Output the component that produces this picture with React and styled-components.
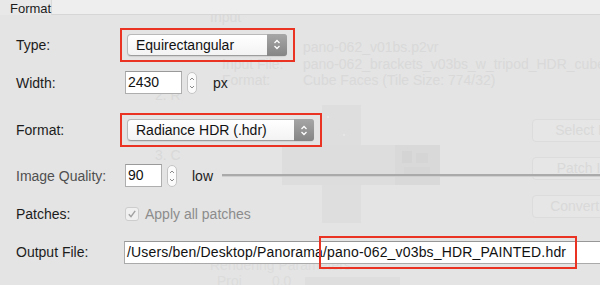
import styled, { createGlobalStyle } from 'styled-components';

const GlobalStyle = createGlobalStyle`
  html, body {
    margin: 0;
    padding: 0;
  }
  body {
    background: #e4e4e4;
    font-family: "Liberation Sans", Arial, sans-serif;
  }
`;

const Window = styled.div`
    position: relative;
    width: 600px;
    height: 285px;
    overflow: hidden;
    background: #e4e4e4;
    font-family: "Liberation Sans", Arial, sans-serif;
    font-size: 14px;
`;

/* faded window behind the sheet */
const Ghost = styled.div`
    position: absolute;
    inset: 0;
    display: flex;
    color: #d9d9d9;
    line-height: 16px;
    pointer-events: none;
`;

const GhostSteps = styled.div`
    flex: 0 0 55px;
    padding-left: 155px;
    display: flex;
    flex-direction: column;
`;

const GhostStep = styled.div`
    margin-top: ${props => props.$top}px;
    white-space: nowrap;
`;

const GhostMain = styled.div`
    flex: 0 0 322px;
    display: grid;
    grid-template-columns: 72px 158px 92px;
    grid-template-rows: 105px 153px 15px 12px;
`;

const GhostInfo = styled.div`
    grid-column: 1 / -1;
    grid-row: 1;
    padding-top: 9px;
    white-space: nowrap;
`;

const GhostInfoGrid = styled.div`
    margin-top: 14px;
    display: grid;
    grid-template-columns: 93px auto;
    line-height: 16.5px;

    .label {
        padding-left: 12px;
    }
`;

const GhostCube = styled.svg`
    grid-column: 2;
    grid-row: 2 / 5;
    display: block;
`;

const GhostCaption = styled.div`
    grid-column: 1 / 3;
    grid-row: ${props => props.$row};
    padding-left: ${props => props.$indent || 0}px;
    display: flex;
    gap: 30px;
    line-height: ${props => props.$lh || 15}px;
    color: #dcdcdc;
    white-space: nowrap;
    z-index: 1;
`;

const GhostButtons = styled.div`
    flex: 0 0 68px;
    display: flex;
    flex-direction: column;
    gap: 15px;
    padding-top: 119px;
`;

const GhostButton = styled.div`
    width: 132px;
    height: 23px;
    box-sizing: border-box;
    border: 1px solid #dcdcdc;
    border-radius: 4px;
    background: #e6e6e6;
    text-align: center;
    line-height: 21px;
    white-space: nowrap;
`;

/* sheet */
const TopBar = styled.div`
    position: relative;
    z-index: 1;
    display: flex;
    height: 15px;
`;

const Tab = styled.div`
    width: 52px;
    box-sizing: border-box;
    padding-left: 10px;
    background: #e8e8e8;
    border-right: 1px solid #dadada;
    font-size: 13px;
    line-height: 17px;
    color: #1c1c1c;
`;

const TabRest = styled.div`
    flex: 1;
    background: #eeeeee;
    border-bottom: 1px solid #d6d6d6;
`;

const Form = styled.div`
    position: relative;
    z-index: 1;
    display: grid;
    grid-template-columns: 109px 1fr;
    grid-template-rows: 35px 41px 54px 37px 40px 36px;
    align-items: center;
    padding: 12px 0 0 16px;
`;

const Label = styled.div`
    color: ${props => props.$muted ? '#505050' : '#1c1c1c'};
    white-space: nowrap;
`;

const Field = styled.div`
    display: flex;
    align-items: center;
    min-width: 0;
`;

const Highlight = styled.div`
    display: inline-flex;
    margin-left: -5px;
    padding: 4px 6px 4px 5px;
    border: 2px solid #ea3323;
`;

const Select = styled.div`
    display: flex;
    width: ${props => props.$width}px;
    height: 22px;
    box-sizing: border-box;
    border: 1px solid #b9b9b9;
    border-bottom-color: #9d9d9d;
    border-radius: 4px;
    background: linear-gradient(#ffffff, #f3f3f3);
    box-shadow: 0 1px 1px rgba(0, 0, 0, 0.08);
`;

const SelectText = styled.div`
    flex: 1;
    padding-left: 8px;
    line-height: 20px;
    color: #111;
    white-space: nowrap;
`;

const SelectArrows = styled.div`
    width: 20px;
    display: flex;
    align-items: center;
    justify-content: center;
    background: linear-gradient(#a6a6a6, #858585);
    border-radius: 0 3px 3px 0;
    margin: -1px -1px -1px 0;
`;

const NumberBox = styled.div`
    width: ${props => props.$width}px;
    height: 23px;
    box-sizing: border-box;
    border: 1px solid #aeaeae;
    border-top-color: #9a9a9a;
    background: #fff;
    padding-left: 2px;
    line-height: 21px;
    color: #111;
`;

const Stepper = styled.div`
    width: 10px;
    height: 22px;
    box-sizing: border-box;
    margin-left: 5px;
    border: 1px solid #c4c4c4;
    border-radius: 5px;
    background: #fbfbfb;
    display: flex;
    align-items: center;
    justify-content: center;
`;

const Unit = styled.span`
    margin-left: ${props => props.$gap}px;
    color: #1c1c1c;
`;

const Slider = styled.div`
    flex: 1;
    margin-left: 9px;
    height: 2px;
    background: #aaaaaa;
    border-bottom: 1px solid #cfcfcf;
`;

const CheckBox = styled.div`
    width: 14px;
    height: 14px;
    box-sizing: border-box;
    border: 1px solid #cdcdcd;
    border-radius: 3px;
    background: #f0f0f0;
    display: flex;
    align-items: center;
    justify-content: center;
`;

const CheckText = styled.span`
    margin-left: 6px;
    color: #8c8c8c;
`;

const PathBox = styled.div`
    flex: 1;
    height: 23px;
    box-sizing: border-box;
    margin-left: -1px;
    margin-right: -20px;
    border: 1px solid #aaaaaa;
    border-top-color: #979797;
    background: #fff;
    padding-left: 2px;
    line-height: 21px;
    letter-spacing: 0.17px;
    color: #111;
    white-space: nowrap;
`;

const Marked = styled.span`
    position: relative;

    &::after {
        content: '';
        position: absolute;
        left: -4px;
        right: -11px;
        top: -8px;
        bottom: -9px;
        border: 2px solid #ea3323;
    }
`;

const BigArrows = () => (
  <svg width="8" height="13" viewBox="0 0 8 13">
    <path d="M1.5 5 L4 2.5 L6.5 5 M1.5 8 L4 10.5 L6.5 8" fill="none" stroke="#fff" strokeWidth="1.3" />
  </svg>
);

const SmallArrows = () => (
  <svg width="6" height="16" viewBox="0 0 6 16">
    <path d="M1 5 L3 3 L5 5 M1 11 L3 13 L5 11" fill="none" stroke="#8a8a8a" strokeWidth="1" />
  </svg>
);

const CheckMark = () => (
  <svg width="10" height="10" viewBox="0 0 10 10">
    <path d="M1.8 5.2 L4 7.6 L8.2 1.8" fill="none" stroke="#a0a0a0" strokeWidth="1.4" />
  </svg>
);

const CubeDrawing = () => (
  <GhostCube width="158" height="180" viewBox="0 0 158 180">
    <rect x="40" y="0" width="39" height="118" fill="#dedede" />
    <rect x="0" y="40" width="158" height="40" fill="#dddddd" />
    <rect x="113" y="40" width="45" height="40" fill="#d9d9d9" />
    <rect x="120" y="46" width="10" height="12" fill="#d4d4d4" />
    <rect x="134" y="48" width="12" height="10" fill="#d5d5d5" />
    <rect x="122" y="62" width="26" height="8" fill="#d6d6d6" />
    <circle cx="46" cy="12" r="1" fill="#e8e8e8" />
    <circle cx="62" cy="30" r="1" fill="#e8e8e8" />
    <rect x="23" y="172" width="95" height="8" fill="#dedede" />
  </GhostCube>
);

const App = () => (
  <Window>
    <GlobalStyle />
    <Ghost>
      <GhostSteps>
        <GhostStep $top={87}>2. R</GhostStep>
        <GhostStep $top={44}>3. C</GhostStep>
      </GhostSteps>
      <GhostMain>
        <GhostInfo>
          <div>Input</div>
          <GhostInfoGrid>
            <span className="label">Project:</span>
            <span>pano-062_v01bs.p2vr</span>
            <span className="label">Input File:</span>
            <span>pano-062_brackets_v03bs_w_tripod_HDR_cube.tif</span>
            <span className="label">Format:</span>
            <span>Cube Faces (Tile Size: 774/32)</span>
          </GhostInfoGrid>
        </GhostInfo>
        <CubeDrawing />
        <GhostCaption $row={3}>Rendering Parameters</GhostCaption>
        <GhostCaption $row={4} $indent={7} $lh={16}>
          <span>Proj</span>
          <span>0.0</span>
        </GhostCaption>
      </GhostMain>
      <GhostButtons>
        <GhostButton>Select Input...</GhostButton>
        <GhostButton>Patch Input...</GhostButton>
        <GhostButton>Convert Input...</GhostButton>
      </GhostButtons>
    </Ghost>

    <TopBar>
      <Tab>Format</Tab>
      <TabRest />
    </TopBar>

    <Form>
      <Label>Type:</Label>
      <Field>
        <Highlight>
          <Select $width={160}>
            <SelectText>Equirectangular</SelectText>
            <SelectArrows><BigArrows /></SelectArrows>
          </Select>
        </Highlight>
      </Field>

      <Label>Width:</Label>
      <Field>
        <NumberBox $width={57}>2430</NumberBox>
        <Stepper><SmallArrows /></Stepper>
        <Unit $gap={16}>px</Unit>
      </Field>

      <Label>Format:</Label>
      <Field>
        <Highlight>
          <Select $width={187}>
            <SelectText>Radiance HDR (.hdr)</SelectText>
            <SelectArrows><BigArrows /></SelectArrows>
          </Select>
        </Highlight>
      </Field>

      <Label $muted>Image Quality:</Label>
      <Field>
        <NumberBox $width={37}>90</NumberBox>
        <Stepper><SmallArrows /></Stepper>
        <Unit $gap={15}>low</Unit>
        <Slider />
      </Field>

      <Label>Patches:</Label>
      <Field>
        <CheckBox><CheckMark /></CheckBox>
        <CheckText>Apply all patches</CheckText>
      </Field>

      <Label>Output File:</Label>
      <Field>
        <PathBox>
          /Users/ben/Desktop/Panorama<Marked>/pano-062_v03bs_HDR_PAINTED.hdr</Marked>
        </PathBox>
      </Field>
    </Form>
  </Window>
);

export default App;
